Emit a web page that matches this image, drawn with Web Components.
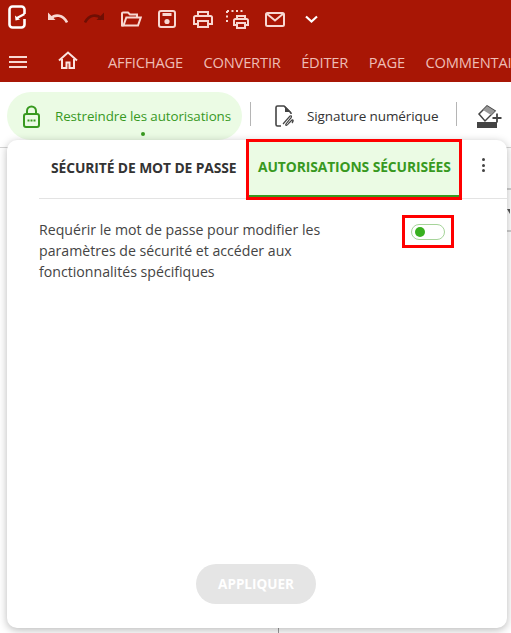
<!DOCTYPE html>
<html lang="fr">
<head>
<meta charset="utf-8">
<title>Autorisations</title>
<style>
html, body { margin: 0; height: 100%; background: #fff; overflow: hidden; }
body { font-family: "Open Sans", "Noto Sans", sans-serif; position: relative; }
</style>
</head>
<body>
<app-ribbon></app-ribbon>
<app-toolbar></app-toolbar>
<page-backdrop></page-backdrop>
<security-panel></security-panel>

<script>
const ribbonTemplate = document.createElement("template");
ribbonTemplate.innerHTML = `
<style>
:host { display: block; background: #a81605; height: 82px; color: #f6d5cf; overflow: hidden; }
.quick { display: flex; align-items: center; height: 38px; }
.quick svg { display: block; flex: none; fill: none; stroke: #f8d8d2; stroke-width: 2; }
.logo { margin: -5px 0 0 8px; stroke: #fff !important; stroke-width: 2.6 !important; }
.undo { margin: -2px 0 0 22px; }
.redo { margin: -2px 0 0 16px; stroke: #6f0f04 !important; fill: #6f0f04 !important; }
.open { margin-left: 17px; }
.save { margin-left: 16px; }
.print { margin-left: 17px; }
.area { margin-left: 13px; }
.mail { margin-left: 15px; }
.more { margin-left: 20px; stroke: #fff !important; stroke-width: 2.2 !important; }
.menu { display: flex; align-items: center; height: 44px; white-space: nowrap; }
.burger { margin-left: 9px; width: 18px; height: 12px; flex: none; border-top: 2px solid #f8d8d2; border-bottom: 2px solid #f8d8d2; position: relative; box-sizing: border-box; margin-top: 4px; }
.burger::after { content: ""; position: absolute; left: 0; right: 0; top: 3px; height: 2px; background: #f8d8d2; }
.home { margin: 0 0 0 31px; flex: none; fill: none; stroke: #fbe3df; stroke-width: 2; }
.items { display: flex; gap: 20.500px; margin-left: 30px; padding-top: 3px; font-size: 14.700px; letter-spacing: -0.2px; color: #eebdb5; }
</style>
<div class="quick">
  <svg class="logo" width="18" height="24" viewBox="0 0 18 24"><path d="M16.500 9V4.500a3 3 0 0 0-3-3H4.500a3 3 0 0 0-3 3v15a3 3 0 0 0 3 3h9a3 3 0 0 0 3-3V14"/><path d="M16.500 9L9 13" stroke-width="2"/><path d="M7 10.500l.5 5 4.500-1z" fill="#fff" stroke="none"/></svg>
  <svg class="undo" width="20" height="12" viewBox="0 0 20 12"><path d="M0 .5v7.500h7.500z" fill="#f8d8d2" stroke="none"/><path d="M3 6.500C7 2 15 2.500 19 10.500" stroke-width="2.600"/></svg>
  <svg class="redo" width="20" height="12" viewBox="0 0 20 12"><path d="M20 .5v7.500h-7.500z" stroke="none"/><path d="M17 6.500C13 2 5 2.500 1 10.500" stroke-width="2.600" fill="none"/></svg>
  <svg class="open" width="21" height="16" viewBox="0 0 21 16"><path d="M2.500 14.500H1V2.500a1 1 0 0 1 1-1h5l2 2h7v3"/><path d="M2.500 14.500l2.800-8h14.500l-2.800 8z"/></svg>
  <svg class="save" width="18" height="18" viewBox="0 0 18 18"><rect x="1" y="1" width="16" height="16" rx="2"/><path d="M4.500 4.500h9" stroke-width="3"/><circle cx="9" cy="11.500" r="2.600" fill="#f8d8d2" stroke="none"/></svg>
  <svg class="print" width="20" height="17" viewBox="0 0 20 17"><path d="M5 5V1h10v4"/><path d="M5 13H1V6.500a1.500 1.500 0 0 1 1.500-1.500h15A1.500 1.500 0 0 1 19 6.500V13h-4"/><rect x="5" y="10" width="10" height="6"/></svg>
  <svg class="area" width="24" height="19" viewBox="0 0 24 19"><path d="M1 1h16M1 1v13" stroke-dasharray="2 2.500"/><path d="M11 9V6h8v3"/><path d="M10 15H8V10.500a1.500 1.500 0 0 1 1.500-1.500h11a1.500 1.500 0 0 1 1.500 1.500V15h-2"/><rect x="11" y="13" width="8" height="5"/></svg>
  <svg class="mail" width="20" height="15" viewBox="0 0 20 15"><rect x="1" y="1" width="18" height="13" rx="1.500"/><path d="M1.500 1.500L10 8.500l8.500-7"/></svg>
  <svg class="more" width="13" height="8" viewBox="0 0 13 8"><path d="M1 1.500l5.500 5 5.500-5"/></svg>
</div>
<div class="menu">
  <span class="burger"></span>
  <svg class="home" width="20" height="18" viewBox="0 0 20 18"><path d="M1 9.500L10 1.500l9 8"/><path d="M4 8v9h4.500v-5.500h3V17H16V8"/></svg>
  <div class="items"><span>AFFICHAGE</span><span>CONVERTIR</span><span>ÉDITER</span><span>PAGE</span><span>COMMENTAIRE</span></div>
</div>
`;

class AppRibbon extends HTMLElement {
  constructor() {
    super();
    this.attachShadow({ mode: "open" });
    this.shadowRoot.appendChild(ribbonTemplate.content.cloneNode(true));
  }
}
customElements.define("app-ribbon", AppRibbon);

const toolbarTemplate = document.createElement("template");
toolbarTemplate.innerHTML = `
<style>
:host { display: block; height: 66px; border-bottom: 1px solid #d4d4d4; overflow: hidden; box-sizing: border-box; }
.row { display: flex; align-items: flex-start; white-space: nowrap; font-size: 13.400px; padding: 10px 0 0 7px; letter-spacing: -0.1px; }
.pill { display: flex; align-items: center; width: 235px; height: 48px; box-sizing: border-box; padding: 0 0 0 16px; background: #ebfbe4; border-radius: 24px; color: #38991f; position: relative; flex: none; font-weight: 500; }
.pill span { margin-left: 15px; }
.pill::after { content: ""; position: absolute; left: 134px; top: 40px; width: 4px; height: 4px; border-radius: 50%; background: #38991f; }
.sep { width: 1px; height: 24px; background: #b5b5b5; margin: 10px 0 0 8px; flex: none; }
.sign { display: flex; align-items: center; height: 48px; color: #333; margin-left: 24px; flex: none; }
.sign span { margin-left: 13px; font-size: 13.500px; }
.sep.last { margin-left: 18px; }
.eraser { margin: 13px 0 0 20px; flex: none; }
svg { display: block; flex: none; }
</style>
<div class="row">
  <div class="pill">
    <svg width="17" height="23" viewBox="0 0 17 23" fill="none" stroke="#38991f" stroke-width="2"><rect x="1" y="9" width="15" height="13" rx="2"/><path d="M4 9V6a4.500 4.500 0 0 1 9 0v3"/><path d="M4.500 15.500h8" stroke-width="2" stroke-dasharray="2 1"/></svg>
    <span>Restreindre les autorisations</span>
  </div>
  <div class="sep"></div>
  <div class="sign">
    <svg width="19" height="22" viewBox="0 0 19 22" fill="none" stroke="#444" stroke-width="1.600"><path d="M6 21H2.500A1.500 1.500 0 0 1 1 19.500v-17A1.500 1.500 0 0 1 2.500 1H9l7 7v1"/><path d="M10 1l6 6h-6z" fill="#444" stroke="none"/><path d="M8 19l7-8c2-1 2 1 0 3l-4 5c-1 2 1 2 3-1l3-3c1-1 2 1 0 3" stroke-width="1.200"/></svg>
    <span>Signature numérique</span>
  </div>
  <div class="sep last"></div>
  <svg class="eraser" width="25" height="24" viewBox="0 0 25 24" fill="none" stroke="#444" stroke-width="1.500"><path d="M10 1l8 5-10 10-6-7z"/><path d="M10 1l8 5-4 4-8-5z" fill="#999" stroke="none"/><rect x="0" y="17" width="20" height="6" fill="#444" stroke="none"/><path d="M20 8.500v9M15.500 13h9" stroke-width="1.800"/></svg>
</div>
`;

class AppToolbar extends HTMLElement {
  constructor() {
    super();
    this.attachShadow({ mode: "open" });
    this.shadowRoot.appendChild(toolbarTemplate.content.cloneNode(true));
  }
}
customElements.define("app-toolbar", AppToolbar);

// what shows of the document around the popup
class PageBackdrop extends HTMLElement {
  constructor() {
    super();
    this.attachShadow({ mode: "open" });
    this.shadowRoot.innerHTML = `
<style>
:host { position: absolute; left: 0; top: 148px; right: 0; bottom: 0; }
.edge { position: absolute; left: 507px; width: 4px; height: 2px; background: #cfcfcf; }
.tip { position: absolute; left: 507px; top: 61px; width: 0; height: 0; border: 3px solid transparent; border-top: 5px solid #555; border-right: 0; }
.rule { position: absolute; left: 278px; bottom: 0; width: 1px; height: 6px; background: #999; }
</style>
<div class="edge" style="top: 40px"></div>
<div class="tip"></div>
<div class="edge" style="top: 82px"></div>
<div class="rule"></div>
`;
  }
}
customElements.define("page-backdrop", PageBackdrop);

const panelTemplate = document.createElement("template");
panelTemplate.innerHTML = `
<style>
:host { position: absolute; left: 7px; top: 140px; width: 500px; height: 488px; background: #fff; border-radius: 10px; box-shadow: 0 2px 8px rgba(0,0,0,.28); display: flex; flex-direction: column; box-sizing: border-box; }
.tabs { display: flex; align-items: stretch; height: 58px; margin: 0 0 0 32px; border-bottom: 1px solid #e3e3e3; flex: none; font-size: 13.850px; font-weight: 700; letter-spacing: -0.1px; white-space: nowrap; }
.tab { display: flex; align-items: center; color: #333; width: 210px; padding: 0 0 4px 12px; box-sizing: border-box; flex: none; }
.tab.active { color: #38991f; background: #ebfbe4; border-bottom: 3px solid #38991f; padding: 0 0 2px 9px; position: relative; }
.active::after { content: ""; position: absolute; left: -3px; right: -3px; top: -1px; bottom: -5px; border: 3px solid #f00; }
.kebab { margin: 18px 0 0 23px; display: flex; flex-direction: column; gap: 2.500px; }
.kebab i { width: 3px; height: 3px; border-radius: 50%; background: #444; display: block; }
.body { display: flex; justify-content: space-between; align-items: flex-start; padding: 20px 53px 0 32px; flex: 1; }
.body p { margin: 0; width: 315px; font-size: 14.150px; line-height: 21px; color: #444; }
.switch { margin: -4px 0 0 0; width: 52px; height: 33px; border: 3px solid #f00; box-sizing: border-box; display: flex; align-items: center; justify-content: center; flex: none; }
.track { width: 34px; height: 16px; border: 1px solid #a6d49a; border-radius: 8px; display: flex; align-items: center; padding-left: 3px; box-sizing: border-box; }
.knob { width: 10px; height: 10px; border-radius: 50%; background: #38b01f; }
.foot { display: flex; justify-content: center; padding: 0 2px 24px 0; flex: none; }
button { width: 120px; height: 40px; border: 0; border-radius: 20px; background: #e5e5e5; color: #fff; font: 700 13.500px "Open Sans", sans-serif; padding: 0; }
</style>
<div class="tabs">
  <div class="tab">SÉCURITÉ DE MOT DE PASSE</div>
  <div class="tab active">AUTORISATIONS SÉCURISÉES</div>
  <div class="kebab"><i></i><i></i><i></i></div>
</div>
<div class="body">
  <p>Requérir le mot de passe pour modifier les paramètres de sécurité et accéder aux fonctionnalités spécifiques</p>
  <div class="switch"><div class="track"><div class="knob"></div></div></div>
</div>
<div class="foot"><button>APPLIQUER</button></div>
`;

class SecurityPanel extends HTMLElement {
  constructor() {
    super();
    this.attachShadow({ mode: "open" });
    this.shadowRoot.appendChild(panelTemplate.content.cloneNode(true));
  }
}
customElements.define("security-panel", SecurityPanel);
</script>
</body>
</html>
